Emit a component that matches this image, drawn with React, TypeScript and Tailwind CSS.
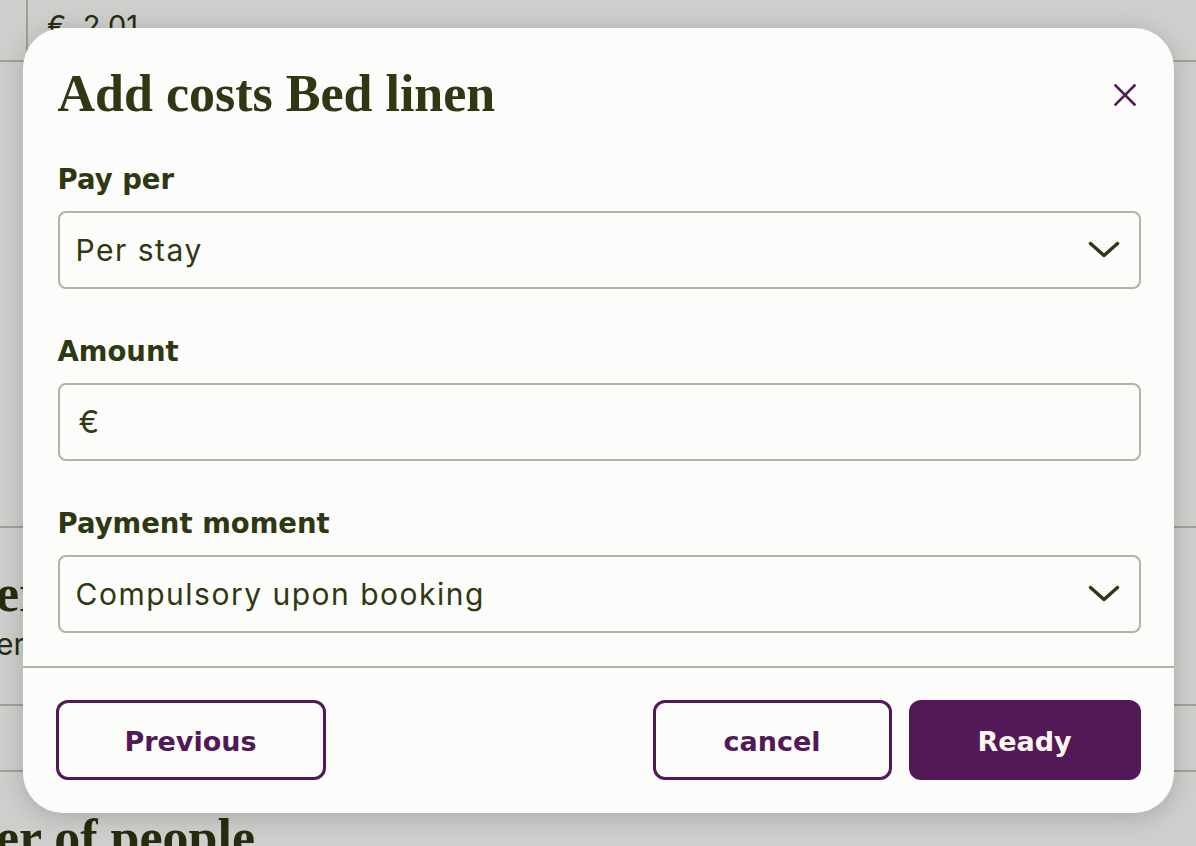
import React from 'react';

const serif = "font-['Liberation_Serif',serif]";
const sans = "font-['Inter',sans-serif]";
const wide = "font-['DejaVu_Sans',sans-serif]";

function Chevron() {
  return (
    <svg width="32" height="18" viewBox="0 0 32 18" fill="none" className="shrink-0">
      <polyline points="2.5,2.5 16,14.5 29.5,2.5" stroke="#2e3812" strokeWidth="3.4" strokeLinecap="round" strokeLinejoin="round" />
    </svg>
  );
}

function Field({ label, children }: { label: string; children: React.ReactNode }) {
  return (
    <div className="flex flex-col gap-[16px]">
      <label className={`${wide} text-[27.5px] leading-[32px] font-bold text-[#2e3812]`}>{label}</label>
      {children}
    </div>
  );
}

function SelectBox({ value }: { value: string }) {
  return (
    <div className="h-[78px] rounded-[8px] border-2 border-[#b4b1a5] bg-[#fcfcfa] flex items-center justify-between pl-[16px] pr-[19px]">
      <span className={`${sans} text-[30px] tracking-[1.5px] text-[#2e3812]`}>{value}</span>
      <Chevron />
    </div>
  );
}

export default function App() {
  return (
    <div className="relative w-full h-[846px] overflow-hidden bg-[#fcfcfa]">
      {/* page behind the dialog */}
      <div className="flex flex-col">
        <div className="h-[62px] border-b-2 border-[#c4c2ba]">
          <div className={`ml-[26px] h-full border-l-2 border-[#c4c2ba] pl-[19px] pt-[4px] ${sans} text-[29px] text-[#2e3812]`}>
            €&nbsp;&nbsp;2.01
          </div>
        </div>
        <div className="h-[466px] border-b-2 border-[#c4c2ba]" />
        <div className="h-[178px] border-b-2 border-[#c4c2ba] pt-[36px] -ml-[4px]">
          <div className={`${serif} text-[52px] leading-[60px] font-bold text-[#2e3812]`}>er</div>
          <div className={`${sans} text-[30px] leading-[40px] text-[#2e3812]`}>er</div>
        </div>
        <div className="h-[66px] border-b-2 border-[#c4c2ba]" />
        <div className={`pt-[36px] -ml-[4px] ${serif} text-[52px] leading-[60px] font-bold text-[#2e3812] whitespace-nowrap`}>
          er of people
        </div>
      </div>

      {/* overlay + dialog */}
      <div className="absolute inset-0 bg-black/[0.18] flex justify-center pt-[28px]">
        <div className="w-[1151px] h-fit rounded-[40px] bg-[#fcfcfa] shadow-[0_4px_24px_rgba(0,0,0,0.18)] flex flex-col">
          <div className="pt-[41px] pl-[35px] pr-[33px] pb-[33px] flex flex-col">
            <div className="flex items-center justify-between h-[50px]">
              <h2 className={`${serif} text-[52px] leading-[50px] font-bold text-[#2e3812]`}>Add costs Bed linen</h2>
              <button className="mr-[5px] mt-[2px]" aria-label="Close">
                <svg width="22" height="22" viewBox="0 0 22 22" fill="none">
                  <path d="M1.5 1.5L20.5 20.5M20.5 1.5L1.5 20.5" stroke="#531a58" strokeWidth="2.6" strokeLinecap="square" />
                </svg>
              </button>
            </div>
            <div className="flex flex-col gap-[46px] mt-[44px]">
              <Field label="Pay per">
                <SelectBox value="Per stay" />
              </Field>
              <Field label="Amount">
                <div className="h-[78px] rounded-[8px] border-2 border-[#b4b1a5] bg-[#fcfcfa] flex items-center pl-[19px]">
                  <span className={`${sans} text-[31px] text-[#2e3812]`}>€</span>
                </div>
              </Field>
              <Field label="Payment moment">
                <SelectBox value="Compulsory upon booking" />
              </Field>
            </div>
          </div>
          <div className="border-t-2 border-[#b4b1a5] px-[33px] pt-[32px] pb-[33px] flex items-center">
            <button className={`w-[270px] h-[80px] pt-[4px] rounded-[12px] border-[3px] border-[#531858] ${wide} text-[27px] font-bold text-[#531858]`}>
              Previous
            </button>
            <div className="ml-auto flex gap-[17px]">
              <button className={`w-[239px] h-[80px] pt-[4px] rounded-[12px] border-[3px] border-[#531858] ${wide} text-[27px] font-bold text-[#531858]`}>
                cancel
              </button>
              <button className={`w-[232px] h-[80px] pt-[4px] rounded-[12px] bg-[#531858] ${wide} text-[27px] font-bold text-[#fbf6ee]`}>
                Ready
              </button>
            </div>
          </div>
        </div>
      </div>
    </div>
  );
}
